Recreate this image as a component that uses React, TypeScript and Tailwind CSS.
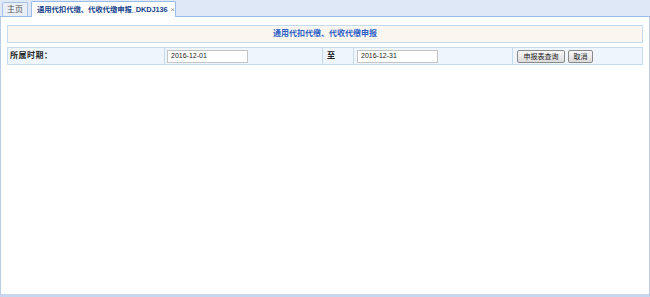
import React from 'react';

function App() {
  return (
    <div className="w-[650px] h-[297px] bg-white text-[8px] text-[#222] overflow-hidden" style={{ fontFamily: '"Liberation Sans", "Noto Sans CJK SC", sans-serif' }}>
      {/* Tab strip */}
      <div className="h-[17px] bg-[#dfe8f6] border-b border-[#99bbe8] flex items-end pl-[2px] gap-[3px]">
        <div className="h-[14px] w-[26px] flex items-center justify-center bg-[#e9eef6] border border-b-0 border-[#a8c2e6] rounded-t-[2px] text-[#555]">主页</div>
        <div className="h-[16px] w-[145px] pl-[5px] flex items-center bg-white border border-b-0 border-[#99bbe8] rounded-t-[2px] -mb-px font-bold text-[#15428b] text-[7.4px]">
          <span className="tracking-[-0.1px]">通用代扣代缴、代收代缴申报_DKDJ136</span>
          <span className="ml-[3px] text-[#888] font-normal">×</span>
        </div>
      </div>

      {/* Content panel */}
      <div className="h-[280px] border-x border-b-[3px] border-[#b9cde8] border-b-[#c7d8ee] pt-[8px] px-[6px]">
        <div className="h-[18px] bg-[#fbf6f0] border border-[#c5d9ef] flex items-center justify-center font-bold text-[#2e5fc7]">
          通用代扣代缴、代收代缴申报
        </div>

        <div className="mt-[4px] h-[18px] bg-[#eef5fd] border border-[#c5d9ef] flex">
          <div className="w-[157px] flex items-center pl-[2px] font-bold border-r border-[#c5d9ef] tracking-[0.5px]">所属时期：</div>
          <div className="w-[158px] flex items-center pl-[2px] border-r border-[#c5d9ef]">
            <div className="w-[81px] h-[13px] bg-white border border-[#c4c4c4] flex items-center pl-[3px] text-[7px]">2016-12-01</div>
          </div>
          <div className="w-[31px] flex items-center pl-[4px] font-bold border-r border-[#c5d9ef]">至</div>
          <div className="w-[159px] flex items-center pl-[3px] border-r border-[#c5d9ef]">
            <div className="w-[81px] h-[13px] bg-white border border-[#c4c4c4] flex items-center pl-[3px] text-[7px]">2016-12-31</div>
          </div>
          <div className="flex-1 flex items-center pl-[4px] gap-[3px]">
            <button className="h-[13px] w-[48px] border border-[#8a8a8a] rounded-[2px] bg-gradient-to-b from-[#f8f8f8] to-[#dcdcdc] flex items-center justify-center text-[7px] leading-none">申报表查询</button>
            <button className="h-[13px] w-[25px] border border-[#8a8a8a] rounded-[2px] bg-gradient-to-b from-[#f8f8f8] to-[#dcdcdc] flex items-center justify-center text-[7px] leading-none">取消</button>
          </div>
        </div>
      </div>
    </div>
  );
}

export default App;
